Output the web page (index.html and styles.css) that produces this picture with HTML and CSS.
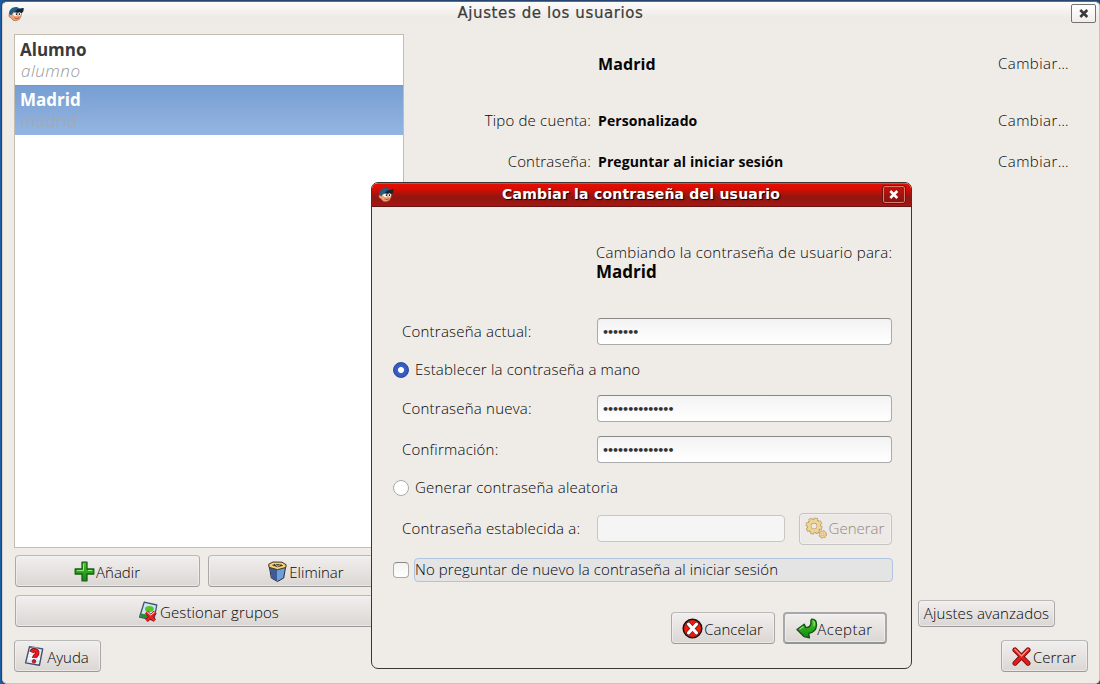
FILE: index.html
```html
<!DOCTYPE html>
<html lang="es">
<head>
<meta charset="utf-8">
<title>Ajustes de los usuarios</title>
<link rel="stylesheet" href="styles.css">
</head>
<body>
<svg class="defs" width="0" height="0" aria-hidden="true">
  <defs>
    <linearGradient id="green" x1="0" y1="0" x2="0" y2="1"><stop offset="0" stop-color="#4cc52d"/><stop offset="1" stop-color="#108a0e"/></linearGradient>
    <symbol id="face" viewBox="0 0 16 16">
      <path d="M2.5 7 L.8 8.6 1.2 10.8 3.3 12 5 14.2 8 14.8 11.3 13.4 13 10.5 13.6 6.5Z" fill="#eba47b" stroke="#a65a3c" stroke-width=".6"/>
      <path d="M1 8 C.8 3.5 4.5 .6 8.8 1 L12 2.6 15.6 2.2 15.2 5.4 13.6 6.8 5.5 6 3.4 9.2Z" fill="#225d85"/>
      <path d="M9.3 3.4 L15.6 2 15.2 5.6 13.6 7 6 6.4Z" fill="#17232d"/>
      <ellipse cx="7.5" cy="8.2" rx="2.2" ry="1.8" fill="#fff"/><ellipse cx="11.4" cy="8" rx="1.5" ry="1.8" fill="#fff"/>
      <path d="M7.8 7.3h1.5v1.8H7.8zM10.8 7.3h1.2v1.8h-1.2z" fill="#222"/>
      <path d="M6.5 12 Q9 13.4 11.2 11.6" fill="none" stroke="#b7432f" stroke-width=".9"/>
    </symbol>
  </defs>
</svg>
<div class="desktop">
  <main class="window">
    <header class="titlebar">
      <svg class="face"><use href="#face"/></svg>
      <h1 class="window-title">Ajustes de los usuarios</h1>
      <button class="close" aria-label="Cerrar ventana"><svg width="10" height="9" viewBox="0 0 10 9"><path d="M1.3 1l7 7M8.3 1l-7 7" stroke="#3b3b3b" stroke-width="2.6"/></svg></button>
    </header>
    <div class="content">
      <section class="sidebar">
        <ul class="users">
          <li class="user"><b class="user-name">Alumno</b><i class="user-login">alumno</i></li>
          <li class="user selected"><b class="user-name">Madrid</b><i class="user-login">madrid</i></li>
        </ul>
        <div class="pair">
          <button class="btn add"><svg width="21" height="21" viewBox="0 0 21 21"><path d="M8 1.2h5V8h6.8v5H13v6.8H8V13H1.2V8H8z" fill="url(#green)" stroke="#175d14" stroke-width="1.3" stroke-linejoin="round"/><path d="M9.5 2.8v6.7H3M14 9.5h4" fill="none" stroke="#9bea7f" stroke-width="1"/></svg><span class="t-add">Añadir</span></button>
          <button class="btn remove"><svg width="21" height="21" viewBox="0 0 21 21"><path d="M2.3 5.5l2 11.5 6.2 3.5 6.2-3.5 2-11.5z" fill="#6b9edb" stroke="#292b3b"/><path d="M2.8 6.3l7.2 2.4v11L4.8 17z" fill="#405a94"/><path d="M1.7 3.2L6 1l9 .2 4.1 2.5-.3 2.8-8.3 2.2L2 6.3z" fill="#f3cf7c" stroke="#40331e"/><path d="M5 4.3l2.4-1.2 6.7.2 2 1.4-5.6 1.5z" fill="#3f3827"/><path d="M8 3.4l3 1.9M13.5 3.5l-3 2" stroke="#e9bd64"/></svg><span class="t-remove">Eliminar</span></button>
        </div>
        <button class="btn groups"><svg width="21" height="21" viewBox="0 0 21 21"><path d="M6.2 1.2l12.6 2.8-3 15.4L1.6 16z" fill="#cde3f7" stroke="#42536b" stroke-width="1.3" stroke-linejoin="round"/><path d="M3 12.5l5.8 1 5 .2-1 5-10-2.8z" fill="#189b24"/><ellipse cx="11.4" cy="8" rx="4.4" ry="2.9" fill="#55c425"/><path d="M8.4 11.2l8.2 8.3M17.4 11.2l-9 8.3" stroke="#890a0a" stroke-width="3.9"/><path d="M8.4 11.2l8.2 8.3M17.4 11.2l-9 8.3" stroke="#ed2222" stroke-width="2.5"/><path d="M9.2 11l3.5 3L16.6 11" fill="none" stroke="#fff" stroke-width=".9"/></svg><span class="t-groups">Gestionar grupos</span></button>
      </section>
      <section class="account">
        <div class="row first"><span class="label"></span><b class="value name">Madrid</b><a class="change">Cambiar…</a></div>
        <div class="row second"><span class="label">Tipo de cuenta:</span><b class="value">Personalizado</b><a class="change">Cambiar…</a></div>
        <div class="row third"><span class="label">Contraseña:</span><b class="value">Preguntar al iniciar sesión</b><a class="change">Cambiar…</a></div>
        <button class="btn advanced"><span class="t-adv">Ajustes avanzados</span></button>
      </section>
    </div>
    <footer class="footer">
      <button class="btn help"><svg width="21" height="22" viewBox="0 0 21 22"><path d="M5.5 1.7l13.2 2.2-3.3 16.4-13.8-2.4z" fill="#dfeaf8" stroke="#43516b" stroke-width="1.4" stroke-linejoin="round"/><path d="M8.3 1.5l6.3 1-.3 2-6.3-1z" fill="#8796ad"/><path d="M5 7.5h6M4.5 10.5h6M4 13.5h6M14 14h2" stroke="#fff" stroke-width="1.5"/><path d="M7.5 7.2C8.5 4.2 13.6 5 13.2 8.3 13 10.5 10.3 10.6 10.3 13" fill="none" stroke="#7b1012" stroke-width="4.4"/><path d="M7.5 7.2C8.5 4.2 13.6 5 13.2 8.3 13 10.5 10.3 10.6 10.3 13" fill="none" stroke="#ef171b" stroke-width="3"/><circle cx="10" cy="16.3" r="1.8" fill="#e4171b" stroke="#7b1012" stroke-width=".7"/></svg><span class="t-help">Ayuda</span></button>
      <button class="btn quit"><svg width="19" height="19" viewBox="0 0 19 19"><path d="M3 2.9l13 13.3M16 2.9L3 16.2" stroke="#681010" stroke-width="5" stroke-linecap="round"/><path d="M3 2.9l13 13.3M16 2.9L3 16.2" stroke="#e71b16" stroke-width="3.4" stroke-linecap="round"/><path d="M3 2.4L9.5 9 16 2.4" fill="none" stroke="#ff9287" stroke-width="1.3" stroke-linecap="round"/></svg><span class="t-quit">Cerrar</span></button>
    </footer>
  </main>

  <section class="dialog" role="dialog">
    <header class="dialog-bar">
      <svg class="face"><use href="#face"/></svg>
      <h2 class="dialog-title">Cambiar la contraseña del usuario</h2>
      <button class="close red" aria-label="Cerrar diálogo"><svg width="10" height="9" viewBox="0 0 10 9"><path d="M1.3 1l7 7M8.3 1l-7 7" stroke="#fff" stroke-width="2.6"/></svg></button>
    </header>
    <div class="dialog-body">
      <div class="intro"><span class="t-intro">Cambiando la contraseña de usuario para:</span><b class="who">Madrid</b></div>
      <div class="field current"><span class="t-current">Contraseña actual:</span><div class="input">•••••••</div></div>
      <div class="choice manual"><i class="radio on"></i><span class="t-manual">Establecer la contraseña a mano</span></div>
      <div class="field new"><span class="t-new">Contraseña nueva:</span><div class="input">••••••••••••••</div></div>
      <div class="field confirm"><span class="t-confirm">Confirmación:</span><div class="input">••••••••••••••</div></div>
      <div class="choice random"><i class="radio"></i><span class="t-random">Generar contraseña aleatoria</span></div>
      <div class="field set"><span class="t-set">Contraseña establecida a:</span><div class="input disabled"></div>
        <button class="btn generate"><svg width="22" height="22" viewBox="0 0 22 22" fill="none"><circle cx="9" cy="9" r="6.8" stroke="#ae9a80" stroke-width="3.4" stroke-dasharray="3.3 2.04"/><circle cx="9" cy="9" r="5" stroke="#ae9a80" stroke-width="4.8"/><circle cx="9" cy="9" r="6.7" stroke="#f1d58d" stroke-width="2.2" stroke-dasharray="2.5 2.76" stroke-dashoffset="-.4"/><circle cx="9" cy="9" r="4.8" stroke="#f1d58d" stroke-width="3.2"/><circle cx="17.7" cy="17.3" r="3.3" stroke="#b59c78" stroke-width="1.8" stroke-dasharray="1.6 1"/><circle cx="17.7" cy="17.3" r="2.3" stroke="#c0a77f" stroke-width="2.6"/><circle cx="17.7" cy="17.3" r="2.3" stroke="#f1d08b" stroke-width="1.6"/></svg><span class="t-generate">Generar</span></button>
      </div>
      <div class="choice skip"><i class="check"></i><div class="focus"><span class="t-skip">No preguntar de nuevo la contraseña al iniciar sesión</span></div></div>
      <div class="actions">
        <button class="btn cancel"><svg width="21" height="21" viewBox="0 0 21 21"><circle cx="10.5" cy="10.5" r="9.3" fill="#f11b0b" stroke="#171111" stroke-width="1.5"/><path d="M6.5 6.2l8 8.6M14.5 6.2l-8 8.6" stroke="#5b1414" stroke-width="4.6" stroke-linecap="round"/><path d="M6.5 6.2l8 8.6M14.5 6.2l-8 8.6" stroke="#fff" stroke-width="3.2" stroke-linecap="round"/></svg><span class="t-cancel">Cancelar</span></button>
        <button class="btn accept"><svg width="22" height="21" viewBox="0 0 22 21"><path d="M15.6 1.2c3.6-.4 5.2 2.5 4.9 6-.3 4.2-3.3 7.5-7.8 8.2l.7 4.4L8 18.6 1 11.5l7.2-5.3 1.6 3.4c3.1.1 5-1.6 5.2-4.7-.4-1.4-.3-2.7.6-3.7z" fill="url(#green)" stroke="#155414" stroke-width="1.4" stroke-linejoin="round"/><path d="M3.4 11.4l4-2.9M17.6 3.1c1.2 1.4 1 3.4.2 5.2" fill="none" stroke="#92e576" stroke-width="1.1"/></svg><span class="t-accept">Aceptar</span></button>
      </div>
    </div>
  </section>
</div>
</body>
</html>
```
FILE: styles.css
```css
* { box-sizing: border-box; }
body { margin: 0; width: 1100px; height: 684px; overflow: hidden; font: 300 15px/20px "Open Sans", "Noto Sans", sans-serif; color: #050505; }
svg { flex: none; }
.defs { position: absolute; }
span, a, b, i { white-space: nowrap; }
h1, h2, ul { margin: 0; padding: 0; }
button { font: inherit; color: inherit; padding: 0; margin: 0; }
.desktop { position: relative; width: 1100px; height: 684px; padding: 1px 0 0 2px; background: linear-gradient(90deg, #1c5da5, #1b4587 20px); }
.window { width: 1098px; height: 683px; border-top: 1px solid #6c6861; border-right: 1px solid #cbc4bc; border-bottom: 1px solid #cbc4bc; border-left: 1px solid #d8d2ca; border-radius: 5px; background: #efebe7; display: flex; flex-direction: column; box-shadow: 0 0 0 1px #26466f; }
.titlebar { height: 32px; flex: none; border-radius: 5px 5px 0 0; display: flex; align-items: flex-start; padding: 1px 4px 0 5px; background: linear-gradient(#fdfcfb, #eeeae6 16px, #efebe7 26px); }
.face { width: 16px; height: 16px; margin-top: 3px; }
.window-title, .dialog-title { flex: 1; text-align: center; font: 400 15px/20px "DejaVu Sans", sans-serif; color: #3b3b3b; }
.window-title { letter-spacing: .6px; padding-left: 6px; -webkit-text-stroke: .2px #3b3b3b; }
.close { width: 25px; height: 19px; margin-top: 1px; border: 1px solid #737373; border-radius: 2px; background: linear-gradient(#fff, #f1eeeb); display: flex; align-items: center; justify-content: center; }
.titlebar .close { margin-right: -1px; }
.content { display: flex; height: 593px; flex: none; }
.sidebar { width: 390px; margin-left: 11px; flex: none; }
.users { list-style: none; height: 514px; background: #fff; border: 1px solid #c5bbb0; }
.user { height: 50px; padding: 5px; display: flex; flex-direction: column; }
.user.selected { background: linear-gradient(#779fd3, #94b5e1); border-top: 1px solid #6d98ce; padding-top: 4px; }
.user-name { font-weight: 700; font-size: 17px; line-height: 20px; color: #3a3a3a; }
.selected .user-name { color: #fff; }
.user-login { font-size: 17px; line-height: 21px; letter-spacing: .5px; color: #999; padding-left: 1px; }
.selected .user-login { color: #a5a8ad; }
.pair { display: flex; gap: 8px; margin: 7px 1px 8px; }
.btn { height: 32px; border: 1px solid #a9a9a9; border-top-color: #b9b9b9; border-bottom-color: #999; border-radius: 4px; background: linear-gradient(#f1efee, #dad6d3); box-shadow: inset 0 0 0 1px #f6f4f399; display: flex; align-items: center; justify-content: center; gap: 1px; padding-top: 2px; }
.btn svg { margin-top: -2px; }
.add { width: 185px; padding-right: 1px; }
.remove { flex: 1; }
.groups { width: 388px; margin-left: 1px; letter-spacing: .12px; padding-right: 1px; }
.account { flex: 1; display: flex; flex-direction: column; }
.row { display: grid; grid-template-columns: 187px 400px 1fr; column-gap: 7px; height: 20px; }
.row.first { margin-top: 20px; }
.row.second { margin-top: 37px; }
.row.third { margin-top: 21px; }
.label { text-align: right; margin-top: -1px; letter-spacing: .18px; }
.value { font-weight: 700; font-size: 14px; letter-spacing: .1px; }
.value.name { font-size: 16px; }
.change { margin: -1px 0 0 -7px; letter-spacing: .45px; }
.advanced { height: 27px; width: 137px; margin: auto 0 0 514px; padding: 0 0 2px; letter-spacing: .1px; }
.footer { display: flex; justify-content: space-between; padding: 13px 11px 0; }
.help { width: 87px; padding-right: 2px; gap: 2px; }
.quit { width: 87px; gap: 2px; padding-right: 1px; }

.dialog { position: absolute; left: 371px; top: 182px; width: 541px; height: 487px; border: 1px solid #3a3632; border-radius: 7px; background: #efebe7; overflow: hidden; display: flex; flex-direction: column; }
.dialog-bar { height: 24px; flex: none; display: flex; padding: 1px 5px 0 6px; border-top: 1px solid #f0432e; border-bottom: 1px solid #651513; background: linear-gradient(#e60d00, #d80c03 5px, #8f1710 13px, #a71710); }
.dialog-title { font-weight: 700; font-size: 14px; line-height: 18px; letter-spacing: .22px; padding-left: 5px; color: #fff; text-shadow: 1px 1px 1px #000; }
.dialog-bar .face { margin-top: 2px; }
.close.red { background: linear-gradient(#c61008, #821713); border-color: #d87c71; outline: 1px solid #651513; width: 22px; height: 17px; margin-right: 1px; }
.dialog-body { padding: 35px 18px 0 21px; }
.intro { padding-left: 203px; display: flex; flex-direction: column; }
.t-intro { letter-spacing: .26px; }
.who { font-weight: 700; font-size: 17px; line-height: 20px; }
.field { display: grid; grid-template-columns: 188px 295px; column-gap: 7px; align-items: center; margin-left: 9px; height: 27px; letter-spacing: .22px; }
.field > span { padding-bottom: 2px; }
.input { height: 27px; border: 1px solid #aaa; border-top-color: #888; border-radius: 4px; background: linear-gradient(#f3f3f3, #fff); font: 700 11px/27px "DejaVu Sans", sans-serif; letter-spacing: -2px; color: #333; padding-left: 4px; }
.current { margin-top: 36px; }
.choice { display: flex; gap: 6px; align-items: center; height: 24px; letter-spacing: .19px; }
.choice > span { padding-bottom: 2px; }
.manual { margin-top: 13px; }
.new { margin-top: 13px; }
.confirm { margin-top: 14px; }
.random { margin-top: 13px; }
.set { margin-top: 13px; grid-template-columns: 188px 188px 93px; height: 32px; letter-spacing: .2px; }
.set .input { width: 188px; margin-bottom: 2px; }
.input.disabled { background: #f5f5f5; border-color: #c7c7c7; }
.generate { width: 93px; margin-left: 7px; padding-right: 2px; padding-bottom: 2px; padding-top: 0; color: #95887a; border-color: #c4c4c4; background: #ece9e7; gap: 2px; }
.generate svg { margin-top: 0; }
.radio { width: 16px; height: 16px; border-radius: 50%; border: 1px solid #aaa; background: #fff; }
.radio.on { border-color: #2b469d; background: radial-gradient(circle, #fff 2.6px, #3a62c8 3.4px, #2e4fae); }
.check { width: 16px; height: 16px; border: 1px solid #aaa; border-top-color: #888; border-radius: 4px; background: linear-gradient(#f3f3f3, #fff); }
.skip { margin-top: 13px; gap: 5px; letter-spacing: .09px; }
.focus { width: 479px; height: 24px; border: 1px solid #b0c4e2; border-radius: 4px; background: #e4e4e4; line-height: 21px; }
.actions { display: flex; justify-content: flex-end; gap: 8px; margin: 30px 6px 0 0; letter-spacing: .25px; }
.actions .btn { padding-right: 1px; }
.cancel { width: 104px; }
.actions .accept { width: 104px; gap: 0; letter-spacing: .45px; border: 2px solid #a6a8aa; border-bottom-color: #929496; }
.accept .t-accept { margin-left: -1px; }
```
